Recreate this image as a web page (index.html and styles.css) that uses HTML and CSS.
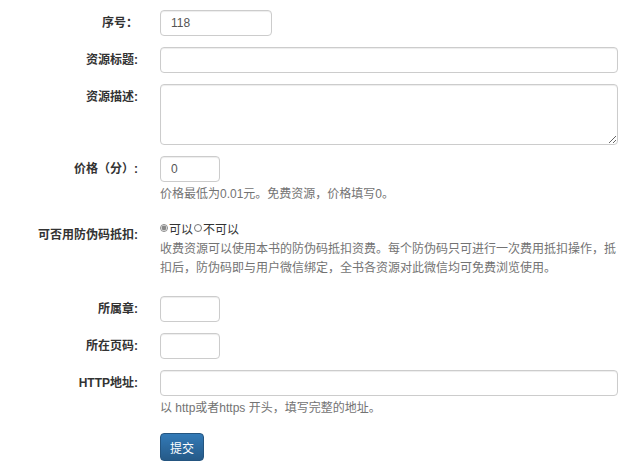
FILE: index.html
```html
<!DOCTYPE html>
<html lang="zh">
<head>
<meta charset="utf-8">
<link rel="stylesheet" href="styles.css">
</head>
<body>
<form class="form">
  <div class="row">
    <label class="label">序号：</label>
    <div class="ctrl"><input class="input input-sm" type="text" value="118"></div>
  </div>
  <div class="row">
    <label class="label">资源标题:</label>
    <div class="ctrl"><input class="input" type="text"></div>
  </div>
  <div class="row">
    <label class="label">资源描述:</label>
    <div class="ctrl"><textarea class="input textarea"></textarea></div>
  </div>
  <div class="row">
    <label class="label">价格（分）:</label>
    <div class="ctrl">
      <input class="input input-xs" type="text" value="0">
      <p class="help">价格最低为0.01元。免费资源，价格填写0。</p>
    </div>
  </div>
  <div class="row row-radio">
    <label class="label label-radio">可否用防伪码抵扣:</label>
    <div class="ctrl">
      <div class="radios">
        <input class="radio" type="radio" name="fw" checked><span>可以</span><input class="radio" type="radio" name="fw"><span>不可以</span>
      </div>
      <p class="help">收费资源可以使用本书的防伪码抵扣资费。每个防伪码只可进行一次费用抵扣操作，抵扣后，防伪码即与用户微信绑定，全书各资源对此微信均可免费浏览使用。</p>
    </div>
  </div>
  <div class="row">
    <label class="label">所属章:</label>
    <div class="ctrl"><input class="input input-xs" type="text"></div>
  </div>
  <div class="row">
    <label class="label">所在页码:</label>
    <div class="ctrl"><input class="input input-xs" type="text"></div>
  </div>
  <div class="row">
    <label class="label">HTTP地址:</label>
    <div class="ctrl">
      <input class="input" type="text">
      <p class="help">以 http或者https 开头，填写完整的地址。</p>
    </div>
  </div>
  <div class="row row-btn">
    <div class="label"></div>
    <div class="ctrl"><button class="btn" type="button">提交</button></div>
  </div>
</form>
</body>
</html>
```

FILE: styles.css
```css
* { box-sizing: border-box; }
html, body { margin: 0; padding: 0; background: #fff; }
body {
  font-family: "Liberation Sans", Arial, "Noto Sans CJK SC", sans-serif;
  font-size: 12px;
  color: #333;
}
.form {
  padding-top: 10px;
  display: flex;
  flex-direction: column;
  gap: 11px;
}
.row {
  display: flex;
  gap: 22px;
}
.label {
  width: 138px;
  flex: none;
  text-align: right;
  font-weight: bold;
  font-size: 12px;
  line-height: 12px;
  padding-top: 7px;
  white-space: nowrap;
}
.label-radio { padding-top: 10px; }
.ctrl {
  width: 458px;
  flex: none;
}
.input {
  display: block;
  width: 458px;
  height: 26px;
  padding: 3px 10px;
  border: 1px solid #ccc;
  border-radius: 4px;
  box-shadow: inset 0 1px 1px rgba(0,0,0,.075);
  font-family: "Liberation Sans", Arial, sans-serif;
  font-size: 12px;
  color: #555;
  background: #fff;
  outline: none;
}
.input-sm { width: 112px; }
.input-xs { width: 60px; }
.textarea { height: 61px; resize: vertical; }
.help {
  margin: 3px 0 0;
  font-size: 12px;
  line-height: 19px;
  color: #737373;
}
.row-radio { margin-top: 4px; }
.radios {
  display: flex;
  align-items: center;
  height: 18px;
  font-size: 12px;
  color: #333;
}
.radio {
  width: 8px;
  height: 8px;
  margin: 0 1px 0 0;
  accent-color: #888;
}
.radios span { margin-right: 1px; }
.row-radio + .row { margin-top: 7px; }
.row-btn { margin-top: 4px; }
.btn {
  height: 28px;
  padding: 0 9px;
  border: 1px solid #245580;
  border-radius: 4px;
  background-image: linear-gradient(to bottom, #337ab7 0, #265a88 100%);
  color: #fff;
  font-family: "Liberation Sans", Arial, "Noto Sans CJK SC", sans-serif;
  font-size: 12px;
  cursor: pointer;
}
```
